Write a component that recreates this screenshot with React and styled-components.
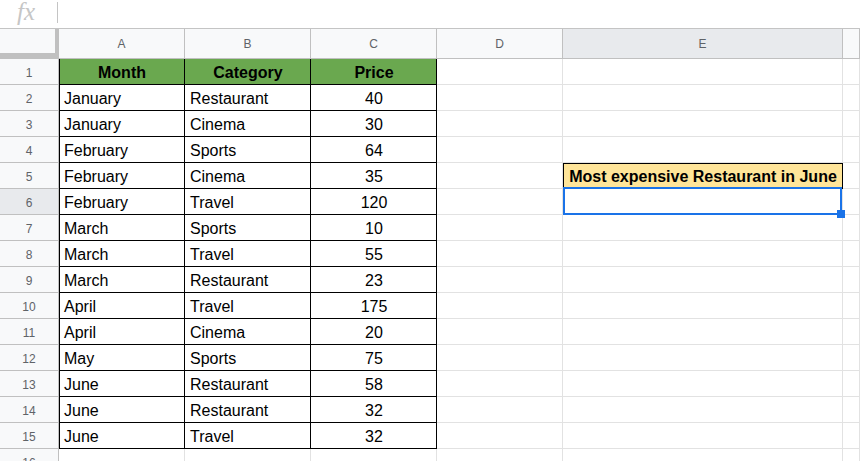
import React from "react";
import { styled, createGlobalStyle } from "styled-components";

const GlobalStyle = createGlobalStyle`
  html, body {
    margin: 0;
    padding: 0;
    background: #fff;
    overflow: hidden;
  }
  body {
    font-family: "Liberation Sans", Arial, sans-serif;
  }
`;

const Page = styled.div`
  width: 860px;
  height: 461px;
  overflow: hidden;
  background: #fff;
`;

const FormulaBar = styled.div`
  height: 28px;
  display: flex;
  align-items: flex-start;
  border-bottom: 1px solid #c4c4c4;
`;

const FxLabel = styled.span`
  width: 57px;
  height: 28px;
  padding: 0 4px 0 17px;
  box-sizing: border-box;
  font-family: "Liberation Serif", "Times New Roman", serif;
  font-style: italic;
  font-size: 25px;
  color: #c6c6c6;
  line-height: 23px;
`;

const FxDivider = styled.span`
  width: 1px;
  height: 21px;
  margin-top: 2px;
  background: #c4c4c4;
`;

const Sheet = styled.div`
  display: grid;
  grid-template-columns: 59px 126px 126px 126px 126px 280px 1fr;
  grid-template-rows: 30px;
  grid-auto-rows: 26px;
`;

const Corner = styled.div`
  background: #f8f9fa;
  box-sizing: border-box;
  border-right: 4px solid #c0c0c0;
  border-bottom: 6px solid #c0c0c0;
`;

const ColHead = styled.div`
  display: flex;
  align-items: center;
  justify-content: center;
  box-sizing: border-box;
  background: ${(p) => (p.$active ? "#e8eaed" : "#f8f9fa")};
  border-right: 1px solid #c0c0c0;
  border-bottom: 1px solid #c0c0c0;
  color: #5f6368;
  font-size: 12px;
  padding-top: 1px;
`;

const RowHead = styled.div`
  display: flex;
  align-items: center;
  justify-content: center;
  box-sizing: border-box;
  background: ${(p) => (p.$active ? "#e8eaed" : "#f8f9fa")};
  border-right: 1px solid #c0c0c0;
  border-bottom: 1px solid #c0c0c0;
  color: #5f6368;
  font-size: 12px;
  padding-top: 2px;
`;

const Cell = styled.div`
  position: relative;
  display: flex;
  align-items: center;
  justify-content: ${(p) => (p.$align === "center" ? "center" : "flex-start")};
  box-sizing: border-box;
  padding: 2px 4px 0 5px;
  font-size: 16px;
  font-weight: ${(p) => (p.$bold ? 700 : 400)};
  color: #000;
  white-space: nowrap;
  background: ${(p) => p.$bg || "#fff"};
  border-right: 1px solid ${(p) => (p.$boxed ? "#000" : "#e2e2e2")};
  border-bottom: 1px solid ${(p) => (p.$boxed ? "#000" : "#e2e2e2")};
  box-shadow: ${(p) =>
    p.$edgeLeft && p.$edgeTop
      ? "inset 1px 1px 0 #000"
      : p.$edgeLeft
      ? "inset 1px 0 0 #000"
      : "none"};
`;

const Selection = styled.div`
  position: absolute;
  z-index: 2;
  left: 0;
  top: -2px;
  right: 0;
  bottom: -1px;
  border: 2px solid #1a73e8;
  pointer-events: none;
`;

const Handle = styled.div`
  position: absolute;
  right: -5px;
  bottom: -5px;
  width: 8px;
  height: 8px;
  background: #1a73e8;
`;

const columns = ["A", "B", "C", "D", "E", ""];

const data = [
  ["January", "Restaurant", "40"],
  ["January", "Cinema", "30"],
  ["February", "Sports", "64"],
  ["February", "Cinema", "35"],
  ["February", "Travel", "120"],
  ["March", "Sports", "10"],
  ["March", "Travel", "55"],
  ["March", "Restaurant", "23"],
  ["April", "Travel", "175"],
  ["April", "Cinema", "20"],
  ["May", "Sports", "75"],
  ["June", "Restaurant", "58"],
  ["June", "Restaurant", "32"],
  ["June", "Travel", "32"],
];

const GREEN = "#6aa84f";
const YELLOW = "#ffe599";

const App = () => {
  const rows = [["Month", "Category", "Price"], ...data];

  return (
    <Page>
      <GlobalStyle />
      <FormulaBar>
        <FxLabel>fx</FxLabel>
        <FxDivider />
      </FormulaBar>
      <Sheet>
        <Corner />
        {columns.map((c, i) => (
          <ColHead key={i} $active={c === "E"}>
            {c}
          </ColHead>
        ))}

        {rows.map((r, i) => {
          const n = i + 1;
          const header = i === 0;
          return (
            <React.Fragment key={n}>
              <RowHead $active={n === 6}>{n}</RowHead>
              {r.map((v, j) => (
                <Cell
                  key={j}
                  $boxed
                  $edgeLeft={j === 0}
                  $bold={header}
                  $bg={header ? GREEN : undefined}
                  $align={header || j === 2 ? "center" : "left"}
                >
                  {v}
                </Cell>
              ))}
              <Cell />
              {n === 5 ? (
                <Cell $boxed $edgeLeft $edgeTop $bold $bg={YELLOW} $align="center">
                  Most expensive Restaurant in June
                </Cell>
              ) : (
                <Cell>
                  {n === 6 && (
                    <Selection>
                      <Handle />
                    </Selection>
                  )}
                </Cell>
              )}
              <Cell />
            </React.Fragment>
          );
        })}

        <RowHead>16</RowHead>
        {columns.map((c, i) => (
          <Cell key={i} />
        ))}
      </Sheet>
    </Page>
  );
};

export default App;
